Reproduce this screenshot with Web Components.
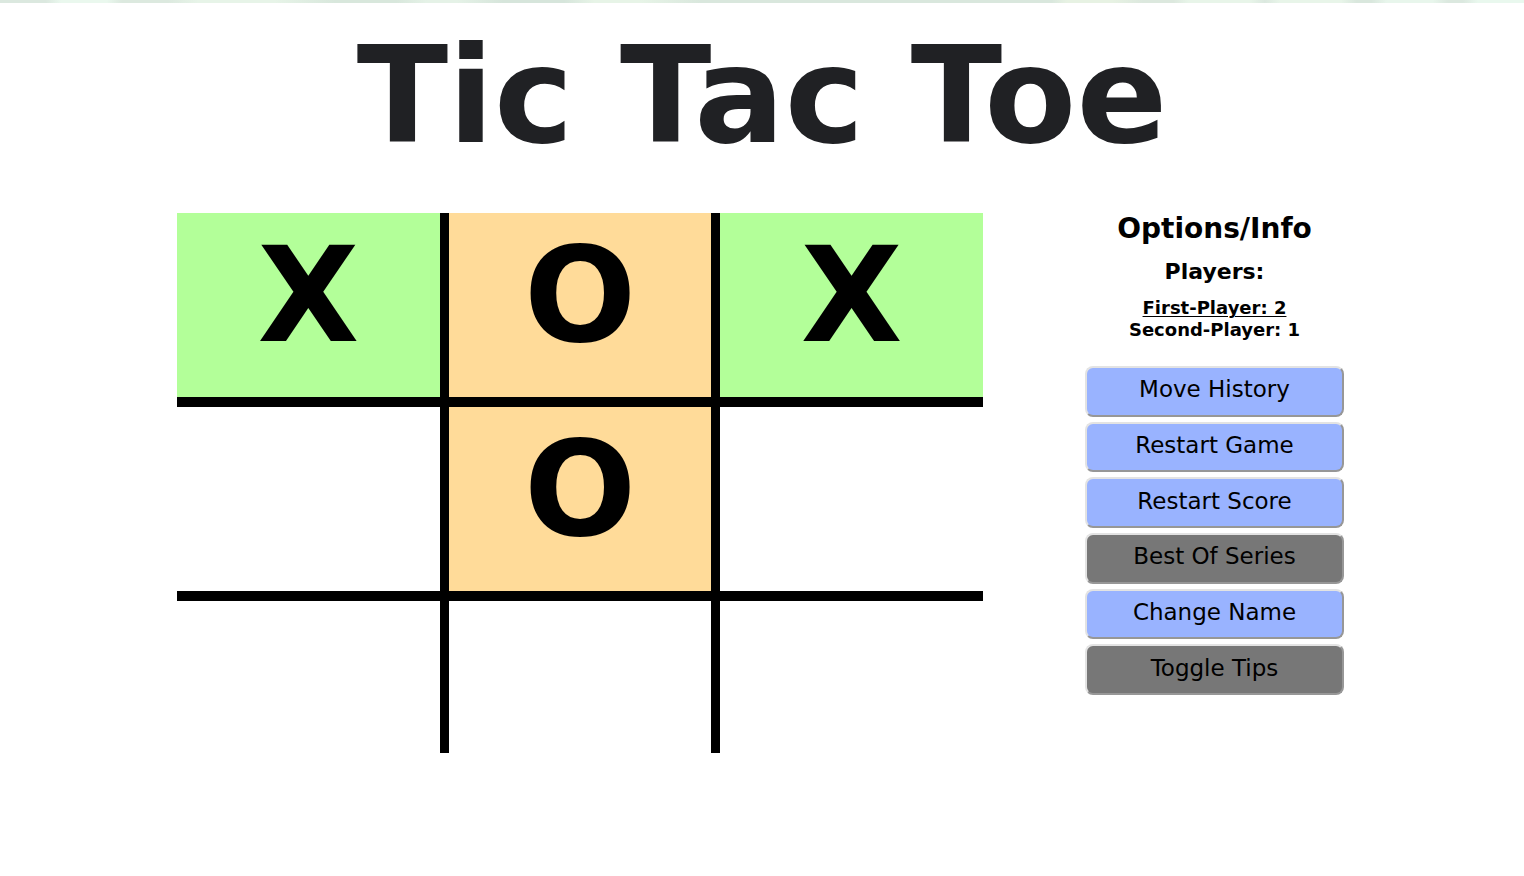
<!DOCTYPE html>
<html lang="en">
<head>
<meta charset="utf-8">
<meta name="viewport" content="width=device-width, initial-scale=1">
<title>Tic Tac Toe</title>
<style>
  body { margin: 0; background: #fff; color: #000; font-family: "DejaVu Sans", sans-serif; }
</style>
</head>
<body>
<tic-tac-toe>
  <game-title>Tic Tac Toe</game-title>
  <game-board slot="board" state="XOX-O----"></game-board>
  <game-options slot="options">
    <player-score slot="players" active>First-Player: 2</player-score>
    <player-score slot="players">Second-Player: 1</player-score>
    <option-button>Move History</option-button>
    <option-button>Restart Game</option-button>
    <option-button>Restart Score</option-button>
    <option-button muted>Best Of Series</option-button>
    <option-button>Change Name</option-button>
    <option-button muted>Toggle Tips</option-button>
  </game-options>
</tic-tac-toe>
<script>
  const define = (name, html, setup) => {
    const template = document.createElement('template');
    template.innerHTML = html;
    customElements.define(name, class extends HTMLElement {
      constructor() {
        super();
        this.attachShadow({ mode: 'open' }).append(template.content.cloneNode(true));
      }
      connectedCallback() {
        if (setup) setup(this);
      }
    });
  };

  define('game-title', `
    <style>
      :host { display: block; text-align: center; color: #202124; }
      h1 { margin: 0; font-size: 134px; line-height: 150px; font-weight: 700; }
    </style>
    <h1><slot></slot></h1>`);

  define('game-board', `
    <style>
      :host { display: grid; grid-template-columns: repeat(3, 1fr); grid-template-rows: 184px 184px 152px;
              gap: 10px 9px; background: #000; }
      button { margin: 0; padding: 0 0 20px; border: 0; border-radius: 0; background: #fff; color: #000;
               font: 700 132px/132px "DejaVu Sans", sans-serif; cursor: pointer; min-width: 0; }
      .x { background: #b3ff99; }
      .o { background: #ffdb99; }
    </style>`, host => {
      [...host.getAttribute('state')].forEach((mark, i) => {
        const cell = document.createElement('button');
        cell.type = 'button';
        if (mark === '-') {
          cell.setAttribute('aria-label', 'Square ' + (i + 1));
        } else {
          cell.textContent = mark;
          cell.className = mark.toLowerCase();
        }
        host.shadowRoot.append(cell);
      });
    });

  define('player-score', `
    <style>
      :host { display: block; font-size: 18px; line-height: 22px; font-weight: 700; white-space: nowrap; }
      :host([active]) { text-decoration: underline 1px; text-underline-offset: 2px; }
    </style>
    <slot></slot>`);

  define('option-button', `
    <style>
      :host { display: grid; }
      button { margin: 0; padding: 0 0 4px; border: 2px solid; border-color: #e3e3e3 #979797 #979797 #e3e3e3;
               border-radius: 8px; background: #99b3ff; color: #000;
               font: 400 23px/28px "DejaVu Sans", sans-serif; cursor: pointer; }
      :host([muted]) button { background: #777; }
    </style>
    <button type="button"><slot></slot></button>`);

  define('game-options', `
    <style>
      :host { display: block; text-align: center; }
      h2 { margin: 0; font-size: 28px; line-height: 32px; }
      h3 { margin: 14px 0 12px; font-size: 22px; line-height: 26px; }
      .actions { display: grid; grid-auto-rows: 1fr; gap: 5px; height: 329px; margin-top: 25px; }
    </style>
    <h2>Options/Info</h2>
    <h3>Players:</h3>
    <slot name="players"></slot>
    <div class="actions"><slot></slot></div>`);

  define('tic-tac-toe', `
    <style>
      :host { display: block; }
      .strip { height: 3px; background:
        linear-gradient(90deg, #dbe8df 0 3%, #eaf8ee 4% 7%, #dce9df 8% 11%, #e7f4e8 13% 18%, #d8e7dc 22% 26%,
        #e5f2e7 28% 30%, #d6e5db 33% 37%, #e7f4e7 39% 42%, #d9e7dd 46% 69%, #e7f2e3 70% 73%, #dce8de 75% 77%,
        #e8f5e9 78% 82%, #dbe8df 83%, #e8f5e9 84% 88%, #d9e7dd 89% 90%, #e8f6ec 91% 94%, #dbe8df 95% 96%, #e9f8ee 97%); }
      header { padding: 18px 0 42px; }
      main { display: grid; grid-template-columns: minmax(0, 1fr) 259px; gap: 102px; align-items: start;
             padding: 0 180px 48px 177px; }
      @media (max-width: 1100px) {
        main { padding: 0 32px 48px; gap: 32px; }
      }
    </style>
    <div class="strip"></div>
    <header><slot></slot></header>
    <main><slot name="board"></slot><slot name="options"></slot></main>`);
</script>
</body>
</html>
